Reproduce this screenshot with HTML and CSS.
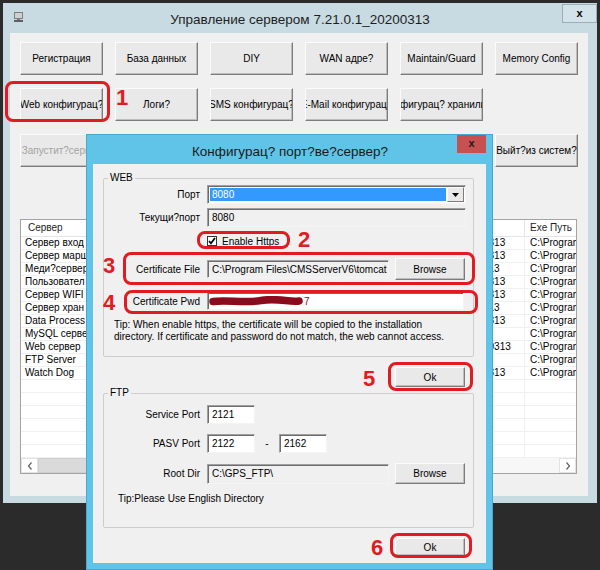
FILE: index.html
```html
<!DOCTYPE html>
<html lang="ru">
<head>
    <meta charset="UTF-8">
    <meta name="viewport" content="width=device-width, initial-scale=1.0">
    <title>Управление сервером</title>
    <link rel="stylesheet" href="styles.css">
</head>
<body>
    <div class="app">
        <div class="app-title">
            <svg class="app-icon" width="11" height="12" viewBox="0 0 11 12">
                <rect x="1" y="1" width="9" height="7" fill="#7d7d7d"/>
                <rect x="2" y="2" width="7" height="5" fill="#cfcfcf"/>
                <rect x="4" y="8" width="3" height="1" fill="#7d7d7d"/>
                <rect x="1" y="9" width="9" height="2" fill="#5f5f5f"/>
            </svg>
            <div class="app-caption">Управление сервером 7.21.0.1_20200313</div>
            <div class="app-close">x</div>
        </div>
        <div class="app-client">
            <div class="btn-grid">
                <button class="btn">Регистрация</button>
                <button class="btn">База данных</button>
                <button class="btn">DIY</button>
                <button class="btn">WAN адре?</button>
                <button class="btn">Maintain/Guard</button>
                <button class="btn">Memory Config</button>

                <button class="btn">Web конфигурац?</button>
                <button class="btn">Логи?</button>
                <button class="btn">SMS конфигурац?</button>
                <button class="btn">E-Mail конфигурац?</button>
                <button class="btn">Конфигурац? хранилищ?</button>
                <span></span>

                <button class="btn btn-off">Запустит?сервер</button>
                <button class="btn btn-off"></button>
                <button class="btn btn-off"></button>
                <button class="btn btn-off"></button>
                <span></span>
                <button class="btn">Выйт?из систем?</button>
            </div>

            <div class="list">
                <div class="lv-head">
                    <div class="lv-cell c1">Сервер</div>
                    <div class="lv-cell c2"></div>
                    <div class="lv-cell c3"></div>
                    <div class="lv-cell c4"></div>
                    <div class="lv-cell c5">Exe Путь</div>
                </div>
                <div class="lv-row"><div class="lv-cell c1">Сервер вход</div><div class="lv-cell c2"></div><div class="lv-cell c3"></div><div class="lv-cell c4">7.21.0.1_20200313</div><div class="lv-cell c5">C:\Program</div></div>
                <div class="lv-row"><div class="lv-cell c1">Сервер марш</div><div class="lv-cell c2"></div><div class="lv-cell c3"></div><div class="lv-cell c4">7.21.0.1_20200313</div><div class="lv-cell c5">C:\Program</div></div>
                <div class="lv-row"><div class="lv-cell c1">Меди?сервер</div><div class="lv-cell c2"></div><div class="lv-cell c3"></div><div class="lv-cell c4">7.2.0.1_20200313</div><div class="lv-cell c5">C:\Program</div></div>
                <div class="lv-row"><div class="lv-cell c1">Пользовател</div><div class="lv-cell c2"></div><div class="lv-cell c3"></div><div class="lv-cell c4">7.21.0.1_20200313</div><div class="lv-cell c5">C:\Program</div></div>
                <div class="lv-row"><div class="lv-cell c1">Сервер WIFI</div><div class="lv-cell c2"></div><div class="lv-cell c3"></div><div class="lv-cell c4">7.21.0.1_20200313</div><div class="lv-cell c5">C:\Program</div></div>
                <div class="lv-row"><div class="lv-cell c1">Сервер хран</div><div class="lv-cell c2"></div><div class="lv-cell c3"></div><div class="lv-cell c4">7.2.0.1_20200313</div><div class="lv-cell c5">C:\Program</div></div>
                <div class="lv-row"><div class="lv-cell c1">Data Process</div><div class="lv-cell c2"></div><div class="lv-cell c3"></div><div class="lv-cell c4">7.21.0.1_20200313</div><div class="lv-cell c5">C:\Program</div></div>
                <div class="lv-row"><div class="lv-cell c1">MySQL серве</div><div class="lv-cell c2"></div><div class="lv-cell c3"></div><div class="lv-cell c4"></div><div class="lv-cell c5">C:\Program</div></div>
                <div class="lv-row"><div class="lv-cell c1">Web сервер</div><div class="lv-cell c2"></div><div class="lv-cell c3"></div><div class="lv-cell c4">7.21.0.1_200200313</div><div class="lv-cell c5">C:\Program</div></div>
                <div class="lv-row"><div class="lv-cell c1">FTP Server</div><div class="lv-cell c2"></div><div class="lv-cell c3"></div><div class="lv-cell c4"></div><div class="lv-cell c5">C:\Program</div></div>
                <div class="lv-row"><div class="lv-cell c1">Watch Dog</div><div class="lv-cell c2"></div><div class="lv-cell c3"></div><div class="lv-cell c4">7.21.0.1_20200313</div><div class="lv-cell c5">C:\Program</div></div>
                <div class="lv-row"><div class="lv-cell c1"></div><div class="lv-cell c2"></div><div class="lv-cell c3"></div><div class="lv-cell c4"></div><div class="lv-cell c5"></div></div>
                <div class="lv-row"><div class="lv-cell c1"></div><div class="lv-cell c2"></div><div class="lv-cell c3"></div><div class="lv-cell c4"></div><div class="lv-cell c5"></div></div>
                <div class="lv-row"><div class="lv-cell c1"></div><div class="lv-cell c2"></div><div class="lv-cell c3"></div><div class="lv-cell c4"></div><div class="lv-cell c5"></div></div>
                <div class="lv-row"><div class="lv-cell c1"></div><div class="lv-cell c2"></div><div class="lv-cell c3"></div><div class="lv-cell c4"></div><div class="lv-cell c5"></div></div>
                <div class="lv-row"><div class="lv-cell c1"></div><div class="lv-cell c2"></div><div class="lv-cell c3"></div><div class="lv-cell c4"></div><div class="lv-cell c5"></div></div>
                <div class="lv-row"><div class="lv-cell c1"></div><div class="lv-cell c2"></div><div class="lv-cell c3"></div><div class="lv-cell c4"></div><div class="lv-cell c5"></div></div>
                <div class="hscroll">
                    <span class="hs-arrow"><svg width="6" height="8" viewBox="0 0 6 8"><path d="M4.5 0.5 L1.5 4 L4.5 7.5" fill="none" stroke="#606060" stroke-width="1.2"/></svg></span>
                    <span class="hs-thumb"></span>
                    <span class="hs-track"></span>
                    <span class="hs-arrow"><svg width="6" height="8" viewBox="0 0 6 8"><path d="M1.5 0.5 L4.5 4 L1.5 7.5" fill="none" stroke="#606060" stroke-width="1.2"/></svg></span>
                </div>
            </div>
        </div>
    </div>

    <!-- диалог настройки портов -->
    <div class="dialog">
        <div class="dlg-title">
            <div class="dlg-caption">Конфигурац? порт?ве?сервер?</div>
            <div class="dlg-close">x</div>
        </div>
        <div class="dlg-client">
            <fieldset class="group group-web">
                <legend>WEB</legend>
                <div class="frow row-port">
                    <label class="flabel">Порт</label>
                    <div class="combo">
                        <span class="combo-sel">8080</span>
                        <span class="combo-btn"><svg width="7" height="4" viewBox="0 0 7 4"><path d="M0 0 H7 L3.5 4 Z" fill="#000"/></svg></span>
                    </div>
                </div>
                <div class="frow row-cur">
                    <label class="flabel">Текущи?порт</label>
                    <div class="tbox ro w-wide">8080</div>
                </div>
                <div class="frow row-https">
                    <span class="check"><svg width="8" height="8" viewBox="0 0 8 8"><path d="M1 4 L3 6.3 L7 1" fill="none" stroke="#000" stroke-width="1.7"/></svg></span>
                    <span>Enable Https</span>
                </div>
                <div class="frow row-cert">
                    <label class="flabel">Certificate File</label>
                    <div class="tbox ro w-path">C:\Program Files\CMSServerV6\tomcat</div>
                    <button class="btn btn-browse">Browse</button>
                </div>
                <div class="frow row-pwd">
                    <label class="flabel">Certificate Pwd</label>
                    <div class="tbox w-pwd">
                        <svg class="redact" width="94" height="11" viewBox="0 0 94 11"><path d="M4 5.5 C 18 3.5, 35 7.5, 52 4.5 S 80 6.5, 90 5" fill="none" stroke="#8a0b1d" stroke-width="7.5" stroke-linecap="round"/></svg><span class="pwd-tail">7</span>
                    </div>
                </div>
                <p class="tip tip-web">Tip: When enable https, the certificate will be copied to the installation<br>directory. If certificate and password do not match, the web cannot access.</p>
            </fieldset>
            <div class="ok-row"><button class="btn btn-ok">Ok</button></div>

            <fieldset class="group group-ftp">
                <legend>FTP</legend>
                <div class="frow row-svc">
                    <label class="flabel">Service Port</label>
                    <div class="tbox w-port">2121</div>
                </div>
                <div class="frow row-pasv">
                    <label class="flabel">PASV Port</label>
                    <div class="tbox w-port">2122</div>
                    <span class="dash">-</span>
                    <div class="tbox w-port">2162</div>
                </div>
                <div class="frow row-root">
                    <label class="flabel">Root Dir</label>
                    <div class="tbox ro w-path">C:\GPS_FTP\</div>
                    <button class="btn btn-browse">Browse</button>
                </div>
                <p class="tip tip-ftp">Tip:Please Use English Directory</p>
            </fieldset>
            <div class="ok-row ok-last"><button class="btn btn-ok">Ok</button></div>
        </div>
    </div>

    <!-- пометки поверх скриншота -->
    <div class="ring ring-1"></div>
    <div class="ring ring-2"></div>
    <div class="ring ring-3"></div>
    <div class="ring ring-4"></div>
    <div class="ring ring-5"></div>
    <div class="ring ring-6"></div>
    <div class="num num-1">1</div>
    <div class="num num-2">2</div>
    <div class="num num-3">3</div>
    <div class="num num-4">4</div>
    <div class="num num-5">5</div>
    <div class="num num-6">6</div>
</body>
</html>
```

FILE: styles.css
```css
* {
    box-sizing: border-box;
}
body {
    margin: 0;
    width: 600px;
    height: 570px;
    overflow: hidden;
    position: relative;
    background: #2b2b2b;
    font-family: "Liberation Sans", Arial, sans-serif;
    font-size: 10px;
    color: #000;
}

/* главное окно */
.app {
    width: 594px;
    height: 500px;
    margin: 3px 0 0 3px;
    background: #c8dae2;
    display: flex;
    flex-direction: column;
}
.app-title {
    height: 30px;
    flex: none;
    display: flex;
    align-items: flex-start;
}
.app-icon {
    margin: 8px 0 0 10px;
}
.app-caption {
    flex: 1;
    text-align: center;
    font-size: 13.5px;
    line-height: 16px;
    padding: 9px 0 0 14px;
    color: #1e1e1e;
}
.app-close {
    width: 35px;
    height: 19px;
    margin-top: 1px;
    border: 1px solid #9cafb7;
    background: #d4e3e9;
    text-align: center;
    font-weight: bold;
    font-size: 11px;
    line-height: 16px;
}
.app-client {
    flex: 1;
    margin: 0 9px 7px 7px;
    padding: 9px 0 0 10px;
    background: #f0f0f0;
}

.btn-grid {
    display: grid;
    grid-template-columns: repeat(6, 83px);
    grid-auto-rows: 33px;
    column-gap: 12px;
    row-gap: 13px;
}
.btn {
    display: flex;
    align-items: center;
    justify-content: center;
    padding: 0;
    margin: 0;
    overflow: hidden;
    white-space: nowrap;
    font-family: inherit;
    font-size: 10px;
    color: #000;
    background: #e9e9e9;
    border: 1px solid;
    border-color: #fbfbfb #7c7c7c #7c7c7c #fbfbfb;
    box-shadow: inset -1px -1px 0 #bdbdbd;
}
.btn-off {
    color: #a3a3a3;
}

/* список серверов */
.list {
    width: 557px;
    margin-top: 52px;
    border: 1px solid #a3a3a3;
    background: #fff;
}
.lv-head {
    display: flex;
    height: 17px;
    border-bottom: 1px solid #e5e5e5;
}
.lv-head .lv-cell {
    line-height: 16px;
    border-right-color: #e5e5e5;
    color: #1e1e1e;
}
.lv-head .c1 {
    padding-left: 7px;
}
.lv-row {
    display: flex;
    height: 13px;
    border-bottom: 1px solid #f0f0f0;
}
.lv-cell {
    flex: none;
    overflow: hidden;
    white-space: nowrap;
    line-height: 12px;
    padding-left: 4px;
    border-right: 1px solid #f0f0f0;
}
.c1 { width: 110px; }
.c2 { width: 110px; }
.c3 { width: 176px; }
.c4 { width: 108px; padding-left: 2px; }
.c5 { width: 51px; padding-left: 5px; border-right: none; }

.hscroll {
    display: flex;
    height: 15px;
    background: #f7f7f7;
}
.hs-arrow {
    width: 17px;
    display: flex;
    align-items: center;
    justify-content: center;
    background: #fff;
    border: 1px solid #e3e3e3;
}
.hs-thumb {
    width: 260px;
    background: #dadada;
    border: 1px solid #cfcfcf;
}
.hs-track {
    flex: 1;
}

/* диалог */
.dialog {
    position: absolute;
    left: 86px;
    top: 134px;
    width: 407px;
    height: 436px;
    background: #60c4e8;
    border: 1px solid #48a9d0;
    display: flex;
    flex-direction: column;
}
.dlg-title {
    height: 29px;
    flex: none;
    display: flex;
    align-items: flex-start;
}
.dlg-caption {
    flex: 1;
    text-align: center;
    font-size: 13.5px;
    line-height: 18px;
    padding: 8px 0 0 36px;
    color: #1a1a1a;
}
.dlg-close {
    width: 29px;
    height: 18px;
    margin-right: 6px;
    background: #c75050;
    text-align: center;
    font-weight: bold;
    font-size: 11px;
    line-height: 16px;
    color: #1a1a1a;
}
.dlg-client {
    flex: 1;
    margin: 0 6px 6px 6px;
    padding: 0 12px 0 10px;
    background: #f0f0f0;
}

.group {
    margin: 0;
    padding: 0 0 13px 0;
    min-width: 0;
    border: 1px solid #cdcdcd;
    border-radius: 2px;
}
.group legend {
    padding: 0 2px;
    margin-left: 4px;
    line-height: 12px;
    font-size: 10px;
}
.group-web {
    margin-top: 8px;
}
.group-ftp {
    padding-bottom: 22px;
}

.frow {
    display: flex;
    align-items: center;
}
.flabel {
    width: 96px;
    flex: none;
    margin-right: 7px;
    text-align: right;
}
.row-port { margin-top: 1px; height: 19px; }
.row-cur { margin-top: 4px; height: 19px; }
.row-https { margin-top: 3px; height: 22px; padding-left: 103px; }
.row-cert { margin-top: 6px; height: 22px; }
.row-pwd { margin-top: 12px; height: 18px; }
.row-svc { margin-top: 6px; height: 19px; }
.row-pasv { margin-top: 10px; height: 19px; }
.row-root { margin-top: 10px; height: 21px; }

.tbox {
    height: 19px;
    padding-left: 4px;
    overflow: hidden;
    white-space: nowrap;
    line-height: 17px;
    background: #fff;
    border: 1px solid;
    border-color: #a0a0a0 #f4f4f4 #f4f4f4 #a0a0a0;
    box-shadow: inset 1px 1px 0 #6d6d6d;
}
.tbox.ro {
    background: #f0f0f0;
}
.w-wide { width: 259px; }
.w-path { width: 182px; height: 18px; }
.w-pwd { width: 257px; height: 18px; display: flex; align-items: center; padding-left: 1px; }
.w-port { width: 48px; }
.row-root .w-path { height: 20px; line-height: 18px; }

.redact {
    display: block;
}
.pwd-tail {
    color: #7d0d1a;
    margin-left: 1px;
}

.dash {
    width: 24px;
    text-align: center;
}

.combo {
    width: 259px;
    height: 19px;
    display: flex;
    padding: 2px 1px 2px 2px;
    background: #fff;
    border: 1px solid;
    border-color: #a0a0a0 #f4f4f4 #f4f4f4 #a0a0a0;
    box-shadow: inset 1px 1px 0 #6d6d6d;
}
.combo-sel {
    flex: 1;
    background: #3399ff;
    color: #fff;
    line-height: 13px;
    padding-left: 2px;
}
.combo-btn {
    width: 17px;
    margin: -1px 0 -1px 1px;
    display: flex;
    align-items: center;
    justify-content: center;
    background: #e9e9e9;
    border: 1px solid;
    border-color: #fbfbfb #7c7c7c #7c7c7c #fbfbfb;
}

.check {
    width: 10px;
    height: 10px;
    margin-right: 5px;
    display: flex;
    align-items: center;
    justify-content: center;
    background: #fff;
    border: 1px solid #333;
}

.btn-browse {
    width: 70px;
    height: 100%;
    margin-left: 6px;
}

.tip {
    margin: 9px 0 0 0;
    line-height: 12px;
}
.tip-web { padding-left: 10px; }
.tip-ftp { padding-left: 14px; }

.ok-row {
    display: flex;
    justify-content: flex-end;
    margin-top: 10px;
    padding-right: 9px;
}
.btn-ok {
    width: 70px;
    height: 20px;
}
.ok-last .btn-ok {
    height: 18px;
}

/* красные пометки */
.ring {
    position: absolute;
    border: 3px solid #e21a22;
    border-radius: 8px;
}
.ring-1 { left: 5px; top: 81px; width: 105px; height: 41px; }
.ring-2 { left: 197px; top: 231px; width: 93px; height: 18px; }
.ring-3 { left: 123px; top: 252px; width: 352px; height: 33px; }
.ring-4 { left: 124px; top: 290px; width: 354px; height: 24px; }
.ring-5 { left: 388px; top: 362px; width: 85px; height: 29px; }
.ring-6 { left: 390px; top: 533px; width: 82px; height: 25px; }

.num {
    position: absolute;
    font-weight: bold;
    font-size: 22px;
    line-height: 22px;
    color: #e21a22;
}
.num-1 { left: 116px; top: 87px; }
.num-2 { left: 298px; top: 229px; }
.num-3 { left: 103px; top: 255px; }
.num-4 { left: 103px; top: 292px; }
.num-5 { left: 363px; top: 368px; }
.num-6 { left: 371px; top: 537px; }
```
